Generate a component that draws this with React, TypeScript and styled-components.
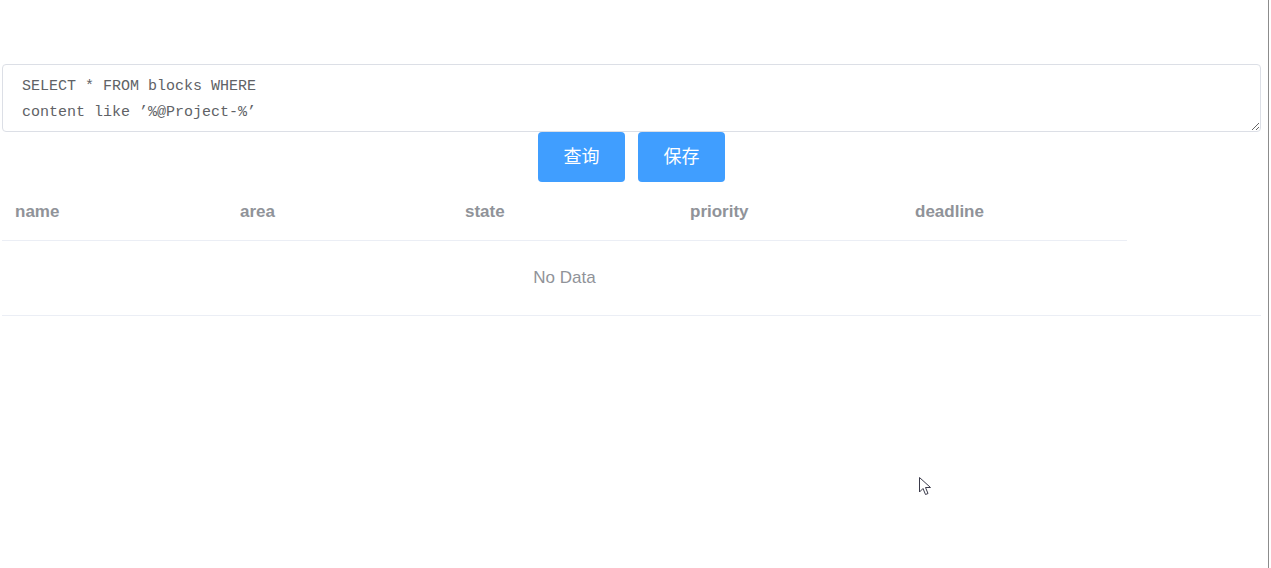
import React from "react";
import styled, { createGlobalStyle } from "styled-components";

const Global = createGlobalStyle`
  html, body { margin: 0; padding: 0; background: #fff; }
  body { font-family: "Liberation Sans", Arial, sans-serif; }
`;

const Page = styled.div`
  position: relative;
  box-sizing: border-box;
  width: 1269px;
  height: 568px;
  padding: 64px 7px 0 2px;
  border-right: 1px solid #8c8c8c;
`;

const QueryBox = styled.textarea`
  display: block;
  box-sizing: border-box;
  width: 100%;
  height: 68px;
  margin: 0;
  padding: 9px 19px 5px;
  border: 1px solid #dcdfe6;
  border-radius: 4px;
  font-family: "Liberation Mono", "DejaVu Sans Mono", monospace;
  font-size: 15px;
  line-height: 26px;
  color: #606266;
  resize: vertical;
  outline: none;
`;

const Actions = styled.div`
  display: flex;
  justify-content: center;
  gap: 13px;
`;

const Button = styled.button`
  width: 87px;
  height: 50px;
  border: none;
  border-radius: 4px;
  background: #409eff;
  color: #fff;
  font-family: "Noto Sans CJK SC", sans-serif;
  font-size: 18px;
  padding: 0 0 5px;
  cursor: pointer;
`;

const Table = styled.div`
  border-bottom: 1px solid #ebeef5;
`;

const HeadRow = styled.div`
  display: grid;
  grid-template-columns: repeat(5, 225px);
  width: 1125px;
  border-bottom: 1px solid #ebeef5;
`;

const HeadCell = styled.div`
  height: 58px;
  display: flex;
  align-items: center;
  padding: 2px 0 0 13px;
  box-sizing: border-box;
  font-size: 17px;
  font-weight: bold;
  color: #909399;
`;

const Empty = styled.div`
  width: 1125px;
  height: 74px;
  display: flex;
  align-items: center;
  justify-content: center;
  font-size: 17px;
  color: #909399;
`;

const Cursor = styled.svg`
  position: absolute;
  left: 919px;
  top: 477px;
`;

const columns = ["name", "area", "state", "priority", "deadline"];

export default function App() {
  return (
    <>
      <Global />
      <Page>
        <QueryBox
          defaultValue={"SELECT * FROM blocks WHERE\ncontent like ’%@Project-%’"}
          spellCheck={false}
        />
        <Actions>
          <Button>查询</Button>
          <Button>保存</Button>
        </Actions>
        <Table>
          <HeadRow>
            {columns.map((c) => (
              <HeadCell key={c}>{c}</HeadCell>
            ))}
          </HeadRow>
          <Empty>No Data</Empty>
        </Table>
        <Cursor width="14" height="20" viewBox="0 0 14 20">
          <path
            d="M0.5 0.5 L0.5 15 L4 11.5 L6.5 17.5 L9 16.5 L6.5 10.5 L11.5 10.5 Z"
            fill="#fff"
            stroke="#3a3a4a"
            strokeWidth="1"
            strokeLinejoin="round"
          />
        </Cursor>
      </Page>
    </>
  );
}
